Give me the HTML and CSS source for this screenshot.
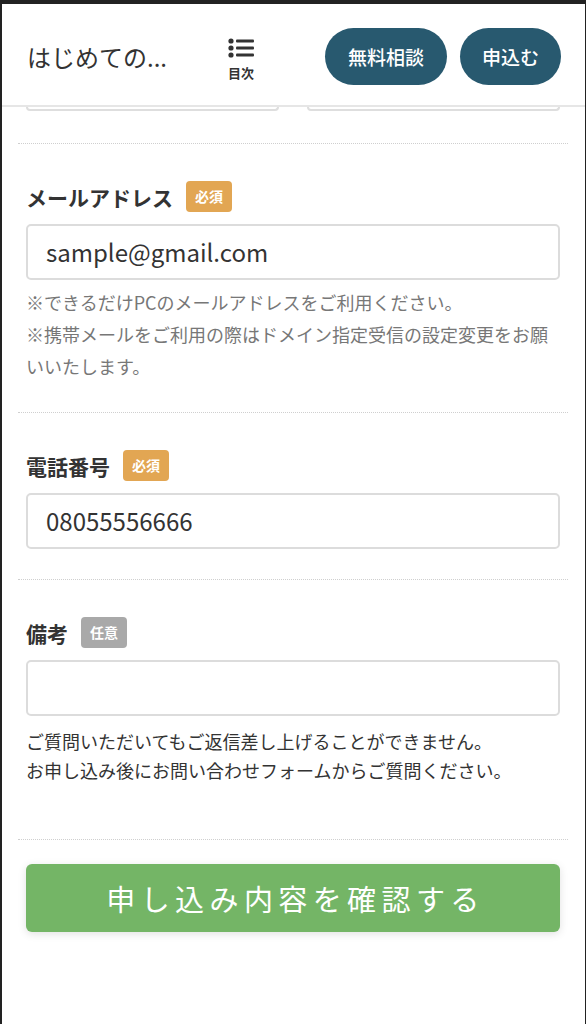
FILE: index.html
```html
<!DOCTYPE html>
<html lang="ja">
<head>
<meta charset="utf-8">
<title>お申し込みフォーム</title>
<link rel="stylesheet" href="styles.css">
</head>
<body>
<div class="page">
  <header class="header">
    <div class="title">はじめての...</div>
    <div class="toc">
      <svg class="toc-icon" width="26" height="20" viewBox="0 0 26 20">
        <circle cx="3" cy="3" r="2.6" fill="#333"/>
        <circle cx="3" cy="10" r="2.6" fill="#333"/>
        <circle cx="3" cy="17" r="2.6" fill="#333"/>
        <rect x="8" y="1.5" width="18" height="3" rx="1" fill="#333"/>
        <rect x="8" y="8.5" width="18" height="3" rx="1" fill="#333"/>
        <rect x="8" y="15.5" width="18" height="3" rx="1" fill="#333"/>
      </svg>
      <span class="toc-label">目次</span>
    </div>
    <div class="actions">
      <a class="pill pill-wide">無料相談</a>
      <a class="pill">申込む</a>
    </div>
  </header>

  <main class="form">
    <div class="prev-row">
      <div class="prev-box"></div>
      <div class="prev-box"></div>
    </div>

    <section class="field">
      <div class="label-row">
        <span class="label">メールアドレス</span>
        <span class="badge badge-req">必須</span>
      </div>
      <div class="input">sample@gmail.com</div>
      <div class="note">
        <p>※できるだけPCのメールアドレスをご利用ください。</p>
        <p>※携帯メールをご利用の際はドメイン指定受信の設定変更をお願いいたします。</p>
      </div>
    </section>

    <section class="field">
      <div class="label-row">
        <span class="label">電話番号</span>
        <span class="badge badge-req">必須</span>
      </div>
      <div class="input">08055556666</div>
    </section>

    <section class="field field-remarks">
      <div class="label-row">
        <span class="label">備考</span>
        <span class="badge badge-opt">任意</span>
      </div>
      <div class="input"></div>
      <div class="note note-dark">
        <p>ご質問いただいてもご返信差し上げることができません。</p>
        <p>お申し込み後にお問い合わせフォームからご質問ください。</p>
      </div>
    </section>

    <section class="submit-area">
      <button class="submit">申し込み内容を確認する</button>
    </section>
  </main>
</div>
</body>
</html>
```

FILE: styles.css
```css
* { box-sizing: border-box; }

html, body {
  margin: 0;
  padding: 0;
}

body {
  background: #222;
  font-family: "Noto Sans CJK JP", "Noto Sans", sans-serif;
  color: #333;
}

.page {
  margin: 4px 1px 0 2px;
  background: #fff;
  min-height: 1020px;
}

.header {
  display: flex;
  align-items: center;
  height: 103px;
  padding: 4px 24px 0 25px;
  border-bottom: 2px solid #e6e6e6;
}

.title {
  width: 189px;
  font-size: 24px;
  color: #333;
  white-space: nowrap;
}

.toc {
  width: 50px;
  display: flex;
  flex-direction: column;
  align-items: center;
  padding-top: 6px;
}

.toc-icon { display: block; }

.toc-label {
  font-size: 13px;
  font-weight: 700;
  margin-top: 6px;
  line-height: 18px;
}

.actions {
  margin-left: auto;
  display: flex;
  gap: 13px;
}

.pill {
  display: flex;
  align-items: center;
  justify-content: center;
  height: 57px;
  width: 101px;
  border-radius: 29px;
  background: #28596f;
  color: #fff;
  font-size: 19px;
  font-weight: 500;
  text-decoration: none;
}

.pill-wide { width: 122px; }

.form {
  padding: 0 17px 0 16px;
}

.prev-row {
  display: flex;
  gap: 28px;
  padding: 0 8px;
  margin-bottom: 32px;
}

.prev-box {
  flex: 1;
  height: 4px;
  border: 2px solid #dedede;
  border-top: none;
  border-radius: 0 0 5px 5px;
}

.field {
  border-top: 1px dotted #cfcfcf;
  padding: 37px 8px 30px;
}

.label-row {
  display: flex;
  align-items: center;
  height: 31px;
}

.label {
  font-size: 21px;
  font-weight: 700;
  color: #333;
}

.badge {
  margin-left: 13px;
  height: 31px;
  padding: 0 9px;
  border-radius: 4px;
  color: #fff;
  font-size: 14px;
  font-weight: 700;
  line-height: 31px;
}

.badge-req { background: #e2a653; }
.badge-opt { background: #a9a9a9; }

.input {
  margin-top: 12px;
  height: 56px;
  border: 2px solid #dcdcdc;
  border-radius: 5px;
  padding: 0 18px;
  font-size: 24px;
  line-height: 52px;
  color: #333;
}

.note {
  margin-top: 6px;
  font-size: 18px;
  line-height: 32px;
  color: #777;
}

.note p { margin: 0; }

.note-dark {
  margin-top: 11px;
  line-height: 29px;
  color: #333;
}

.field-remarks { padding-bottom: 54px; }

.submit-area {
  border-top: 1px dotted #cfcfcf;
  padding: 24px 8px 60px;
}

.submit {
  display: block;
  width: 100%;
  height: 68px;
  border: none;
  border-radius: 6px;
  background: #74b566;
  color: #fff;
  font-family: "Noto Sans CJK JP", "Noto Sans", sans-serif;
  font-size: 29px;
  letter-spacing: 5.4px;
  text-indent: 5px;
  box-shadow: 0 2px 8px rgba(0,0,0,0.12);
}
```
